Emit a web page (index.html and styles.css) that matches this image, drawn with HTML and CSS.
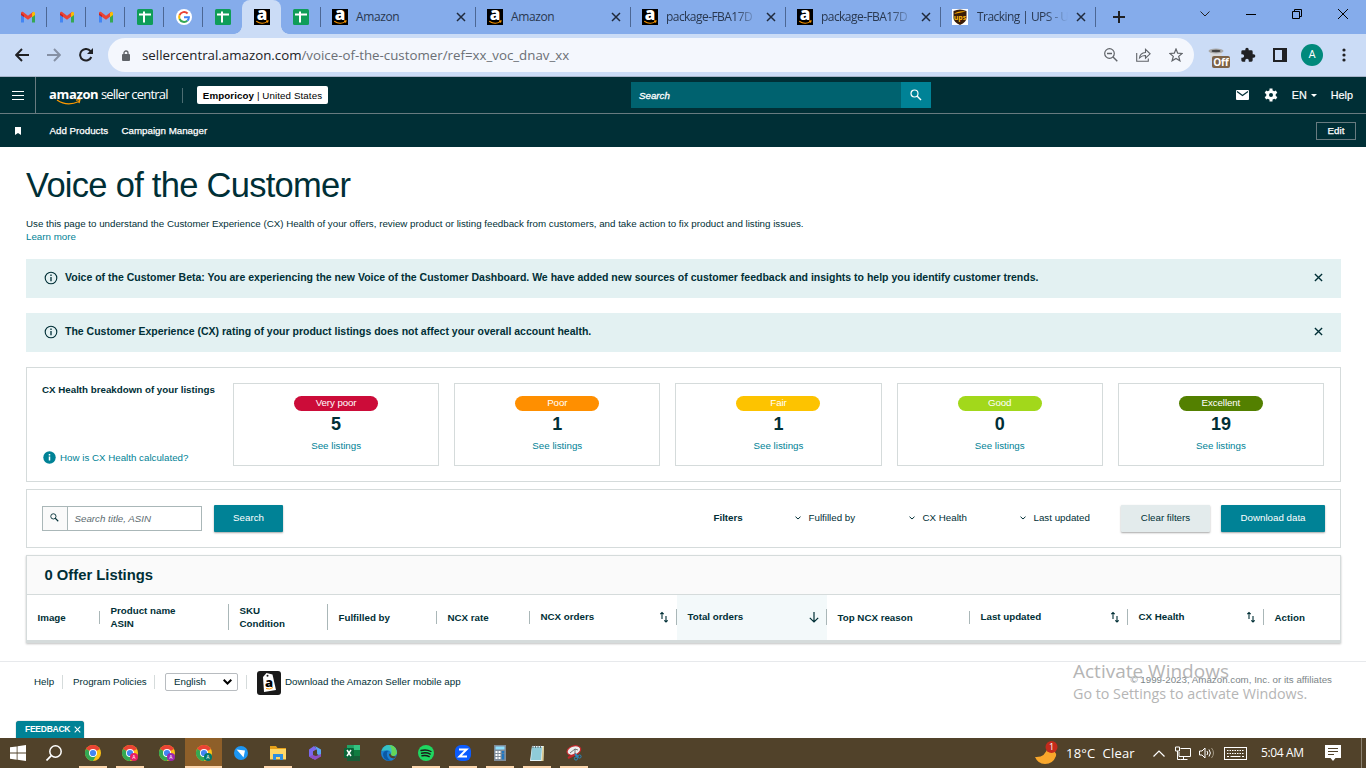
FILE: index.html
```html
<!DOCTYPE html>
<html lang="en">
<head>
  <meta charset="UTF-8">
  <meta name="viewport" content="width=device-width, initial-scale=1.0">
  <title>Voice of the Customer</title>
  <link rel="stylesheet" href="styles.css">
</head>
<body>
  <!-- Shared icons -->
  <svg class="sprite" width="0" height="0">
    <symbol id="gmail" viewBox="0 0 16 12">
      <path d="M1 2v9.500h3V5z" fill="#4285f4"/>
      <path d="M15 2v9.500h-3V5z" fill="#34a853"/>
      <path d="M1 2.200Q1 .5 2.800 .8L8 4.800l5.200-4L12.500 5.300 8 8.800 1 3.800z" fill="#ea4335"/>
      <path d="M12 2l1.500-1.300Q15 .6 15 2.200V4l-3 2.200z" fill="#fbbc04"/>
      <path d="M1 2.200L4 4.300V6L1 4z" fill="#c5221f"/>
    </symbol>
    <symbol id="sheets" viewBox="0 0 16 16">
      <rect width="16" height="16" rx="1.500" fill="#0f9d58"/>
      <path d="M2 5.500h12M7 2.500v11" stroke="#fff" stroke-width="2"/>
    </symbol>
    <symbol id="amz" viewBox="0 0 16 16">
      <rect width="16" height="16" fill="#000"/>
      <text x="8" y="11.300" text-anchor="middle" font-family="Open Sans, sans-serif" font-size="17" font-weight="800" fill="#fff">a</text>
      <path d="M2.300 12.200q5.500 3.800 11 .4M12 12l2-.2-.5 1.800" stroke="#f90" stroke-width="1.100" fill="none"/>
    </symbol>
    <symbol id="close" viewBox="0 0 10 10"><path d="M1 1l8 8M9 1L1 9" stroke="currentColor" stroke-width="1.500"/></symbol>
    <symbol id="mag" viewBox="0 0 12 12"><circle cx="4.500" cy="4.500" r="3.500" fill="none" stroke="currentColor" stroke-width="1.200"/><path d="M7 7l4 4" stroke="currentColor" stroke-width="1.500"/></symbol>
    <symbol id="info" viewBox="0 0 14 14"><circle cx="7" cy="7" r="5.800" fill="none" stroke="currentColor" stroke-width="1.100"/><path d="M7 6v4.200M7 3.600v1.300" stroke="currentColor" stroke-width="1.300"/></symbol>
    <symbol id="chev" viewBox="0 0 6 4"><path d="M.5 .7L3 3 5.500 .7" fill="none" stroke="currentColor"/></symbol>
    <symbol id="sort" viewBox="0 0 10 12"><path d="M3 8V1.500M1.300 3.200L3 1.500l1.700 1.700M7 5v6M5.300 9.300L7 11l1.700-1.700" fill="none" stroke="currentColor" stroke-width="1.100"/></symbol>
    <symbol id="chrome" viewBox="0 0 16 16">
      <circle cx="8" cy="8" r="8" fill="#fbc116"/>
      <path d="M8 8L1.070 4A8 8 0 0 1 14.930 4z" fill="#ea4335"/>
      <path d="M1.070 4A8 8 0 0 0 8 16l3.500-6L8 8z" fill="#34a853"/>
      <circle cx="8" cy="8" r="4" fill="#fff"/>
      <circle cx="8" cy="8" r="3.100" fill="#4285f4"/>
    </symbol>
  </svg>

  <!-- Browser tabs -->
  <div class="tabs">
    <div class="tab"><svg class="gm"><use href="#gmail"/></svg></div>
    <div class="tab"><svg class="gm"><use href="#gmail"/></svg></div>
    <div class="tab"><svg class="gm"><use href="#gmail"/></svg></div>
    <div class="tab"><svg class="fav"><use href="#sheets"/></svg></div>
    <div class="tab">
      <svg class="fav" viewBox="0 0 16 16">
        <circle cx="8" cy="8" r="8" fill="#fff"/>
        <g fill="none" stroke-width="2">
          <path d="M3.600 6A4.900 4.900 0 0 1 11.600 4.500" stroke="#ea4335"/>
          <path d="M3.600 10A4.900 4.900 0 0 1 3.600 6" stroke="#fbbc05"/>
          <path d="M11.300 11.700A4.900 4.900 0 0 1 3.600 10" stroke="#34a853"/>
          <path d="M8 8.200h4.900A4.900 4.900 0 0 1 11.300 11.700" stroke="#4285f4"/>
        </g>
      </svg>
    </div>
    <div class="tab no-line"><svg class="fav"><use href="#sheets"/></svg></div>
    <div class="tab active"><svg class="fav"><use href="#amz"/></svg></div>
    <div class="tab last-small"><svg class="fav"><use href="#sheets"/></svg></div>
    <div class="tab wide"><svg class="fav"><use href="#amz"/></svg><span class="tab-title">Amazon</span><svg class="tab-x"><use href="#close"/></svg></div>
    <div class="tab wide"><svg class="fav"><use href="#amz"/></svg><span class="tab-title">Amazon</span><svg class="tab-x"><use href="#close"/></svg></div>
    <div class="tab wide"><svg class="fav"><use href="#amz"/></svg><span class="tab-title fade">package-FBA17D</span><svg class="tab-x"><use href="#close"/></svg></div>
    <div class="tab wide"><svg class="fav"><use href="#amz"/></svg><span class="tab-title fade">package-FBA17D</span><svg class="tab-x"><use href="#close"/></svg></div>
    <div class="tab wide">
      <svg class="fav" viewBox="0 0 16 16">
        <rect width="16" height="16" fill="#fff"/>
        <path d="M1.500 2Q8-1 14.500 2v7q0 4-6.500 7-6.500-3-6.500-7z" fill="#3a1c08"/>
        <path d="M2 5Q6 1.500 14 2.500L2 5z" fill="#f7a900"/>
        <text x="8" y="10.500" text-anchor="middle" font-family="Open Sans, sans-serif" font-size="7" font-weight="700" fill="#fdb913">ups</text>
      </svg>
      <span class="tab-title fade ups-title">Tracking | UPS - U</span><svg class="tab-x"><use href="#close"/></svg>
    </div>
    <svg class="new-tab" viewBox="0 0 12 12"><path d="M6 0v12M0 6h12" stroke="#202124" stroke-width="2"/></svg>
    <div class="win-controls">
      <svg width="10" height="6" viewBox="0 0 10 6"><path d="M.5 .5L5 5 9.500 .5" fill="none" stroke="#222"/></svg>
      <svg width="10" height="2" viewBox="0 0 10 2"><path d="M0 1.500h10" stroke="#000"/></svg>
      <svg width="10" height="10" viewBox="0 0 10 10"><path d="M.5 2.500h7v7h-7zM2.500 2.500v-2h7v7h-2" fill="none" stroke="#000"/></svg>
      <svg width="10" height="10" viewBox="0 0 10 10"><path d="M0 0l10 10M10 0L0 10" stroke="#000"/></svg>
    </div>
  </div>

  <!-- Address bar -->
  <div class="toolbar">
    <svg class="nav-icon" viewBox="0 0 14 14"><path d="M14 7H1.500M7 1L1.200 7 7 13" fill="none" stroke="#202124" stroke-width="1.900"/></svg>
    <svg class="nav-icon" viewBox="0 0 14 14"><path d="M0 7h12.500M7 1l5.800 6L7 13" fill="none" stroke="#8590a4" stroke-width="1.900"/></svg>
    <svg class="nav-icon" viewBox="0 0 14 14"><path d="M12.300 9A5.800 5.800 0 1 1 11.500 3.200L13 5" fill="none" stroke="#202124" stroke-width="2"/><path d="M14 0v6H8z" fill="#202124"/></svg>
    <div class="omnibox">
      <svg width="8" height="11" viewBox="0 0 8 11"><rect y="4" width="8" height="7" rx="1" fill="#5f6368"/><path d="M2 4.500V3a2 2 0 0 1 4 0v1.500" fill="none" stroke="#5f6368" stroke-width="1.300"/></svg>
      <span class="url">sellercentral.amazon.com<span>/voice-of-the-customer/ref=xx_voc_dnav_xx</span></span>
      <svg width="14" height="14" viewBox="0 0 14 14"><circle cx="5.500" cy="5.500" r="4.800" fill="none" stroke="#5f6368" stroke-width="1.200"/><path d="M3 5.500h5M9 9l4.300 4.300" stroke="#5f6368" stroke-width="1.400"/></svg>
      <svg width="15" height="14" viewBox="0 0 15 14"><path d="M.7 5v8.300h11.600V10.500M3.500 10q.5-5 6-5.500V1.300l4.600 4.500-4.600 4.400V7.500Q6 7.300 3.500 10z" fill="none" stroke="#5f6368" stroke-width="1.100"/></svg>
      <svg width="14" height="14" viewBox="0 0 14 14"><path d="M7 1l1.700 4.200 4.500.3-3.500 2.900 1.200 4.400L7 10.400l-3.900 2.400 1.200-4.400L.8 5.500l4.500-.3z" fill="none" stroke="#5f6368" stroke-width="1.200"/></svg>
    </div>
    <div class="ext">
      <svg width="16" height="14" viewBox="0 0 16 14"><path d="M2 3l1 10h10l1-10z" fill="#d8dadd"/><ellipse cx="8" cy="3" rx="7.500" ry="2.500" fill="#aaa"/><ellipse cx="8" cy="3" rx="4.500" ry="1.200" fill="#444"/></svg>
      <span class="ext-badge">Off</span>
    </div>
    <svg class="puzzle" viewBox="0 0 24 24"><path d="M20.500 11H19V7a2 2 0 0 0-2-2h-4V3.500a2.500 2.500 0 0 0-5 0V5H4a2 2 0 0 0-2 2v3.800h1.500a2.700 2.700 0 0 1 0 5.400H2V20a2 2 0 0 0 2 2h3.800v-1.500a2.700 2.700 0 0 1 5.400 0V22H17a2 2 0 0 0 2-2v-4h1.500a2.500 2.500 0 0 0 0-5z" fill="#202124"/></svg>
    <svg class="panel-icon" viewBox="0 0 14 14"><path d="M1 1h12v12H1z" fill="none" stroke="#202124" stroke-width="2"/><path d="M9 1h4v12H9z" fill="#202124"/></svg>
    <span class="avatar">A</span>
    <svg class="dots" viewBox="0 0 4 14"><circle cx="2" cy="2" r="1.600"/><circle cx="2" cy="7" r="1.600"/><circle cx="2" cy="12" r="1.600"/></svg>
  </div>

  <!-- Seller Central header -->
  <header class="sc-header">
    <div class="burger"><svg width="12" height="9" viewBox="0 0 12 9"><path d="M0 .5h12M0 4.500h12M0 8.500h12" stroke="#fff"/></svg></div>
    <div class="logo">
      <b>amazon</b> <span>seller central</span>
      <svg class="smile" width="26" height="8" viewBox="0 0 26 8"><path d="M1 2q10 7 22 1.500M20 2.200l4-.6-1 3.600" fill="none" stroke="#f90" stroke-width="1.300"/></svg>
    </div>
    <div class="account"><b>Emporicoy</b> | United States</div>
    <div class="top-search">
      <span>Search</span>
      <div class="top-search-btn"><svg width="12" height="12"><use href="#mag"/></svg></div>
    </div>
    <div class="header-right">
      <svg width="13" height="10" viewBox="0 0 13 10"><rect width="13" height="10" rx="1" fill="#fff"/><path d="M1 1.500l5.500 4 5.500-4" fill="none" stroke="#002f36" stroke-width="1.200"/></svg>
      <svg class="gear" width="14" height="14" viewBox="0 0 14 14"><path d="M7 .5v13M1.400 3.800l11.200 6.400M12.600 3.800L1.400 10.200" stroke="#fff" stroke-width="3"/><circle cx="7" cy="7" r="4.800" fill="#fff"/><circle cx="7" cy="7" r="2" fill="#002f36"/></svg>
      <span class="lang">EN</span>
      <svg class="caret" width="6" height="3" viewBox="0 0 6 3"><path d="M0 0h6L3 3z" fill="#fff"/></svg>
      <span>Help</span>
    </div>
  </header>
  <nav class="sc-nav">
    <svg width="6" height="8" viewBox="0 0 6 8"><path d="M0 0h6v8L3 6 0 8z" fill="#fff"/></svg>
    <span class="nav-add">Add Products</span>
    <span class="nav-camp">Campaign Manager</span>
    <span class="edit">Edit</span>
  </nav>

  <main class="page">
    <h1>Voice of the Customer</h1>
    <p class="intro">Use this page to understand the Customer Experience (CX) Health of your offers, review product or listing feedback from customers, and take action to fix product and listing issues.</p>
    <a class="learn">Learn more</a>

    <div class="alert">
      <svg class="info"><use href="#info"/></svg>
      <span>Voice of the Customer Beta: You are experiencing the new Voice of the Customer Dashboard. We have added new sources of customer feedback and insights to help you identify customer trends.</span>
      <svg class="alert-x"><use href="#close"/></svg>
    </div>
    <div class="alert">
      <svg class="info"><use href="#info"/></svg>
      <span>The Customer Experience (CX) rating of your product listings does not affect your overall account health.</span>
      <svg class="alert-x"><use href="#close"/></svg>
    </div>

    <!-- CX Health breakdown -->
    <section class="health">
      <div class="health-side">
        <b>CX Health breakdown of your listings</b>
        <a class="how"><svg width="13" height="13" viewBox="0 0 13 13"><circle cx="6.500" cy="6.500" r="6.200" fill="#008296"/><path d="M6.500 5.500v4M6.500 3v1.500" stroke="#fff" stroke-width="1.500"/></svg>How is CX Health calculated?</a>
      </div>
      <div class="health-card"><span class="pill very-poor">Very poor</span><strong>5</strong><a>See listings</a></div>
      <div class="health-card"><span class="pill poor">Poor</span><strong>1</strong><a>See listings</a></div>
      <div class="health-card"><span class="pill fair">Fair</span><strong>1</strong><a>See listings</a></div>
      <div class="health-card"><span class="pill good">Good</span><strong>0</strong><a>See listings</a></div>
      <div class="health-card"><span class="pill excellent">Excellent</span><strong>19</strong><a>See listings</a></div>
    </section>

    <!-- Search and filters -->
    <section class="filters">
      <div class="search-box">
        <div class="search-icon"><svg width="9" height="9"><use href="#mag"/></svg></div>
        <span>Search title, ASIN</span>
      </div>
      <div class="btn btn-search">Search</div>
      <b class="filters-label">Filters</b>
      <span class="filter f1"><svg><use href="#chev"/></svg>Fulfilled by</span>
      <span class="filter f2"><svg><use href="#chev"/></svg>CX Health</span>
      <span class="filter f3"><svg><use href="#chev"/></svg>Last updated</span>
      <div class="btn btn-clear">Clear filters</div>
      <div class="btn btn-download">Download data</div>
    </section>

    <!-- Listings table -->
    <section class="listings">
      <h2>0 Offer Listings</h2>
      <div class="thead">
        <div class="th"><span>Image</span></div>
        <div class="th"><span>Product name<br>ASIN</span></div>
        <div class="th"><span>SKU<br>Condition</span></div>
        <div class="th"><span>Fulfilled by</span></div>
        <div class="th"><span>NCX rate</span></div>
        <div class="th sortable"><span>NCX orders<svg><use href="#sort"/></svg></span></div>
        <div class="th sortable sorted"><span>Total orders<svg viewBox="0 0 10 12"><path d="M5 1v10M.8 6.800L5 11l4.200-4.200" fill="none" stroke="currentColor" stroke-width="1.200"/></svg></span></div>
        <div class="th"><span>Top NCX reason</span></div>
        <div class="th sortable"><span>Last updated<svg><use href="#sort"/></svg></span></div>
        <div class="th sortable"><span>CX Health<svg><use href="#sort"/></svg></span></div>
        <div class="th"><span>Action</span></div>
      </div>
    </section>
  </main>

  <footer class="footer">
    <span class="foot-help">Help</span>
    <span class="foot-policies">Program Policies</span>
    <div class="foot-lang">
      <div class="select">English<svg width="9" height="6" viewBox="0 0 9 6"><path d="M.7 .8l3.800 3.700L8.300 .8" fill="none" stroke="#000" stroke-width="2"/></svg></div>
    </div>
    <svg class="app-icon" viewBox="0 0 24 24">
      <rect width="24" height="24" rx="3" fill="#1a1a1a"/>
      <path d="M6 6l3.500-4 6 1.500L19 19 7 21z" fill="#fff"/><circle cx="10.500" cy="4.800" r="1" fill="#1a1a1a"/>
      <text x="12" y="15.500" text-anchor="middle" font-family="Open Sans, sans-serif" font-size="13" font-weight="800">a</text>
      <path d="M9 17.500q4 1.500 7-1" stroke="#f90" fill="none"/>
    </svg>
    <span class="foot-app">Download the Amazon Seller mobile app</span>
    <span class="copy">© 1999-2023, Amazon.com, Inc. or its affiliates</span>
  </footer>

  <div class="watermark"><div>Activate Windows</div><p>Go to Settings to activate Windows.</p></div>
  <div class="feedback">FEEDBACK<svg width="7" height="7"><use href="#close"/></svg></div>

  <!-- Windows taskbar -->
  <div class="taskbar">
    <div class="task start"><svg viewBox="0 0 16 16" fill="#fff"><path d="M0 2.300L6.700 1.400v6.200H0zM7.500 1.300L16 0v7.600H7.500zM0 8.400h6.700v6.300L0 13.700zM7.500 8.400H16V16l-8.500-1.200z"/></svg></div>
    <div class="task find"><svg viewBox="0 0 16 16"><circle cx="9.500" cy="6.500" r="5.700" fill="none" stroke="#fff" stroke-width="1.500"/><path d="M5.300 10.700L.5 15.500" stroke="#fff" stroke-width="1.700"/></svg></div>
    <div class="task open"><svg><use href="#chrome"/></svg></div>
    <div class="task open"><svg viewBox="0 0 16 16"><use href="#chrome"/><circle cx="12" cy="12" r="4" fill="#e91e63"/><text x="12" y="14" class="mini">A</text></svg></div>
    <div class="task"><svg viewBox="0 0 16 16"><use href="#chrome"/><circle cx="12" cy="12" r="4" fill="#9c27b0"/><text x="12" y="14" class="mini">A</text></svg></div>
    <div class="task open current"><svg viewBox="0 0 16 16"><use href="#chrome"/><circle cx="12" cy="12" r="4" fill="#00796b"/><text x="12" y="14" class="mini">A</text></svg></div>
    <div class="task"><svg viewBox="0 0 16 16"><circle cx="8" cy="8" r="7" fill="#1c96f3"/><path d="M3.500 4.500l8.500 1-1.500 7-2-2.500z" fill="#fff"/></svg></div>
    <div class="task open"><svg viewBox="0 0 16 16"><path d="M0 1h6l1.500 2H16v11H0z" fill="#e5a01a"/><path d="M0 4h16v10.500H0z" fill="#ffd766"/><path d="M3 9h10v6h-3v-3H6v3H3z" fill="#2f8fe0"/></svg></div>
    <div class="task"><svg viewBox="0 0 16 16"><path d="M7 1L2 4.500v7L6 14V6.500L10 4z" fill="#7b68ee"/><path d="M8 1l6 3.500v7L10 9V5.500z" fill="#5aa7f5"/><path d="M2 11.500L6 10l3 1 5-2v2.500L8 15z" fill="#8c4fc4"/><circle cx="8" cy="8" r="2.200" fill="#51422a"/></svg></div>
    <div class="task"><svg viewBox="0 0 16 16"><path d="M3 0h13v16H3z" fill="#107c41"/><path d="M3 0h6.500v5H3z" fill="#21a366"/><path d="M9.500 0H16v5H9.500z" fill="#33c481"/><path d="M3 11h13v5H3z" fill="#185c37"/><rect y="3" width="10" height="10" rx="1" fill="#0b6337"/><path d="M3 5l4 6M7 5l-4 6" stroke="#fff" stroke-width="1.500"/></svg></div>
    <div class="task"><svg viewBox="0 0 16 16"><circle cx="8" cy="8" r="8" fill="#1b80d2"/><path d="M.5 6Q3-1 10 .3 16 2 16 8q-1 3.500-5 3-2-.5-1-2.500 0-5-9.500-2.500z" fill="#36c2c5"/><path d="M8 .1q7 0 8 7.900-.5 2-3 3-2 .3-3-.8Q12 3 8 .1z" fill="#65d657"/><path d="M6 8q-1 5 4 7.800Q3 16 2 10q0-5 6-4Q6 6.500 6 8z" fill="#0c59a4"/><path d="M9.500 8.500q0 3 5.500 3L13 13.500Q8 13 8 9z" fill="#51422a"/></svg></div>
    <div class="task open"><svg viewBox="0 0 16 16"><circle cx="8" cy="8" r="8" fill="#1ed760"/><path d="M3 5.500q5.500-1.500 10 1M3.500 8.200q5-1.200 8.700.9M4 10.800q4-1 7.200.8" fill="none" stroke="#1a1a1a" stroke-width="1.400" stroke-linecap="round"/></svg></div>
    <div class="task open"><svg viewBox="0 0 16 16"><rect width="16" height="16" rx="6" fill="#0b5cff"/><path d="M4 4.500h7.500L4.500 11.500H12" fill="none" stroke="#fff" stroke-width="2"/></svg></div>
    <div class="task open"><svg viewBox="0 0 16 16"><rect x="2" width="12" height="16" fill="#7e8b99"/><rect x="3.500" y="1.500" width="9" height="3" fill="#8ee0ff"/><path d="M4.500 6v8.500M7.500 6v8.500" stroke="#fff" stroke-width="2" stroke-dasharray="2 1"/><path d="M11 6v2.500M11 9v5.500" stroke="#2277c0" stroke-width="2.500"/></svg></div>
    <div class="task open"><svg viewBox="0 0 16 16"><path d="M3 1h12l-1 15H1z" fill="#e8f6fa"/><path d="M3 2h10l-1 13H2z" fill="#8fcbd8"/><path d="M13.500 2L15 1l-.5 15h-2z" fill="#d8c890"/><path d="M4 0v3M6.500 0v3M9 0v3M11.500 0v3" stroke="#555" stroke-width=".8"/></svg></div>
    <div class="task open"><svg viewBox="0 0 16 16"><ellipse cx="8" cy="5.500" rx="7" ry="4.500" fill="#eee" stroke="#c3272b" stroke-width="1.200" transform="rotate(-18 8 6)"/><path d="M4 8l5-4 3 1M9 4v5" stroke="#555" stroke-width=".8" fill="none"/><path d="M2 13l8-4" stroke="#c3272b" stroke-width="2"/><path d="M9 9l3 3" stroke="#2c88c0" stroke-width="2"/><circle cx="10" cy="13.500" r="1.600" fill="none" stroke="#2c88c0"/><circle cx="13.500" cy="11.500" r="1.600" fill="none" stroke="#2c88c0"/></svg></div>

    <div class="tray">
      <svg width="24" height="24" viewBox="0 0 24 24"><path d="M1 16q10 1 13-10 9 4 8 9-3 8-11 8-7 0-10-7z" fill="#f9a72b"/><circle cx="17.500" cy="6" r="6" fill="#c42b1c"/><text x="17.500" y="9.300" text-anchor="middle" font-size="9" font-family="Open Sans, sans-serif" fill="#fff">1</text></svg>
      <span class="weather">18°C&nbsp; Clear</span>
      <svg class="up" width="12" height="7" viewBox="0 0 12 7"><path d="M.5 6.500L6 1l5.500 5.500" fill="none" stroke="#fff" stroke-width="1.200"/></svg>
      <svg class="net" width="16" height="14" viewBox="0 0 16 14"><path d="M5.500 2.500h10v8H4V6M8.500 10.500v3M5.500 13.500h7M.5 1h4v4h-4zM2.500 5v8.500h3" fill="none" stroke="#fff"/></svg>
      <svg class="vol" width="16" height="14" viewBox="0 0 16 14"><path d="M.5 5h2.500l3-3v10L3 9H.5zM8 5q1.500 2 0 4M10 3.500q2.800 3.500 0 7" fill="none" stroke="#fff"/><path d="M12.500 2q4 5 0 10" fill="none" stroke="#a59b87"/></svg>
      <svg class="keys" width="23" height="13" viewBox="0 0 23 13"><rect x=".5" y=".5" width="22" height="12" fill="none" stroke="#fff"/><path d="M3 3.500h17M3 6.500h17" stroke="#fff" stroke-dasharray="1.500 1"/><path d="M3 9.500h2M6.500 9.500h10M18 9.500h2" stroke="#fff"/></svg>
      <span class="clock">5:04 AM</span>
      <svg class="notif" width="16" height="16" viewBox="0 0 16 16"><path d="M0 0h16v13H10.500L8 16l-2.500-3H0z" fill="#fff"/><path d="M3 3.500h10M3 6.500h10M3 9.500h6" stroke="#51422a"/></svg>
      <i class="peek"></i>
    </div>
  </div>
</body>
</html>
```
FILE: styles.css
```css
* { box-sizing: border-box; }
body {
  margin: 0;
  width: 1366px;
  height: 768px;
  overflow: hidden;
  position: relative;
  display: flex;
  flex-direction: column;
  background: #fff;
  color: #002f36;
  font-family: "Liberation Sans", Arial, sans-serif;
  font-size: 9.75px;
  line-height: 13px;
  white-space: nowrap;
}
svg { display: block; flex: none; }
.sprite { position: absolute; }
a { color: #008296; }

/* ---------- Browser tabs ---------- */
.tabs {
  height: 34px;
  flex: none;
  display: flex;
  padding-left: 8px;
  background: #85aceb;
}
.tab {
  width: 39px;
  flex: none;
  display: flex;
  align-items: center;
  justify-content: center;
  background: linear-gradient(#4c6794, #4c6794) no-repeat right 7px / 1px 20px;
}
.tab.no-line { background: none; }
.tab.last-small { width: 40px; padding-right: 1px; }
.tab.active {
  background: #cbdcf6;
  border-radius: 8px 8px 0 0;
  position: relative;
}
.tab.active::before,
.tab.active::after {
  content: "";
  position: absolute;
  bottom: 0;
  width: 8px;
  height: 8px;
}
.tab.active::before { left: -8px; background: radial-gradient(circle at 0 0, transparent 7.5px, #cbdcf6 8px); }
.tab.active::after { right: -8px; background: radial-gradient(circle at 100% 0, transparent 7.5px, #cbdcf6 8px); }
.tab.wide {
  width: 155px;
  justify-content: flex-start;
  padding-left: 11px;
  background-position: right 7px;
}
.fav { width: 16px; height: 16px; }
.gm { width: 16px; height: 12px; }
.tab-title {
  margin-left: 8px;
  width: 94px;
  color: #293850;
  font: 12px/18px "Open Sans", sans-serif;
  letter-spacing: -.4px;
}
.fade {
  width: 92px;
  margin-right: 2px;
  letter-spacing: -.55px;
  -webkit-mask-image: linear-gradient(to right, #000 75%, transparent);
  mask-image: linear-gradient(to right, #000 75%, transparent);
}
.ups-title { margin-left: 9px; width: 91px; }
.tab-x { width: 10px; height: 10px; margin-left: 6px; color: #202a3c; }
.new-tab { width: 12px; height: 12px; margin: 11px 0 0 17px; }
.win-controls {
  margin-left: 75px;
  height: 28px;
  display: flex;
  align-items: center;
  gap: 36px;
}

/* ---------- Address bar ---------- */
.toolbar {
  height: 43px;
  flex: none;
  display: flex;
  align-items: center;
  padding-left: 15px;
  background: #cbdcf6;
  border-bottom: 1px solid #a7b4ca;
}
.nav-icon { width: 14px; height: 14px; margin-right: 18px; }
.omnibox {
  width: 1086px;
  height: 34px;
  margin-left: -3px;
  padding: 0 11px 0 14px;
  display: flex;
  align-items: center;
  gap: 18px;
  border-radius: 17px;
  background: #f4f7fd;
}
.url {
  flex: 1;
  margin-left: -6px;
  color: #202124;
  font: 13.300px/20px "Open Sans", sans-serif;
}
.url span { color: #6b6f75; }
.ext { position: relative; margin-left: 14px; width: 22px; }
.ext-badge {
  position: absolute;
  left: 4px;
  top: 8px;
  width: 18px;
  border-radius: 2px;
  background: #7d6347;
  color: #fff;
  text-align: center;
  font: bold 10px/12px "Open Sans", sans-serif;
}
.puzzle { width: 16px; height: 16px; margin-left: 10px; }
.panel-icon { width: 14px; height: 14px; margin-left: 17px; }
.avatar {
  width: 22px;
  height: 22px;
  margin-left: 14px;
  border-radius: 50%;
  background: #00897b;
  color: #fff;
  text-align: center;
  font: 11px/22px Roboto, sans-serif;
}
.dots { width: 4px; height: 14px; margin-left: 19px; fill: #202124; }

/* ---------- Seller Central header ---------- */
.sc-header {
  height: 37px;
  flex: none;
  display: flex;
  align-items: center;
  background: #002f36;
  border-bottom: 1px solid #687b80;
  color: #fff;
}
.burger {
  width: 36px;
  height: 36px;
  display: flex;
  align-items: center;
  justify-content: center;
  border-right: 1px solid #687b80;
}
.logo {
  position: relative;
  width: 147px;
  padding: 0 0 3px 13px;
  border-right: 1px solid #4d6d72;
  line-height: 12px;
  font-family: "Open Sans", sans-serif;
  font-size: 13px;
  letter-spacing: -.8px;
}
.logo b { letter-spacing: -.35px; }
.smile { position: absolute; left: 20px; top: 10px; }
.account {
  width: 131px;
  height: 18px;
  margin-left: 14px;
  border-radius: 2px;
  background: #fff;
  color: #000;
  text-align: center;
  line-height: 19px;
  letter-spacing: .1px;
}
.top-search {
  width: 300px;
  height: 26px;
  margin-left: 303px;
  padding-left: 8px;
  display: flex;
  align-items: center;
  justify-content: space-between;
  background: #00626f;
  font-style: italic;
  -webkit-text-stroke: .3px #fff;
}
.top-search-btn {
  width: 30px;
  height: 26px;
  display: flex;
  align-items: center;
  justify-content: center;
  background: #008296;
}
.header-right {
  margin-left: auto;
  padding-right: 13px;
  display: flex;
  align-items: center;
  font-size: 10.800px;
  -webkit-text-stroke: .2px #fff;
}
.gear { margin-left: 15px; }
.lang { margin-left: 14px; }
.caret { margin: 0 14px 0 4px; }
.sc-nav {
  height: 33px;
  flex: none;
  display: flex;
  align-items: center;
  padding: 0 10px 0 15px;
  background: #002f36;
  color: #fff;
  -webkit-text-stroke: .25px #fff;
}
.nav-add { margin-left: 28.500px; width: 72px; }
.edit {
  width: 40px;
  height: 18px;
  margin-left: auto;
  border: 1px solid #687b80;
  text-align: center;
  line-height: 16px;
}

/* ---------- Page content ---------- */
.page { padding: 18px 25px 0 26px; }
h1 {
  margin: 0 0 12px;
  font-size: 34.500px;
  font-weight: normal;
  line-height: 41px;
  height: 40px;
  letter-spacing: -.72px;
}
.intro { margin: 0; }
.learn { display: block; margin-bottom: 16px; }
.alert {
  height: 39px;
  margin-bottom: 15px;
  padding: 0 18px 2px;
  display: flex;
  align-items: center;
  background: #e3f1f2;
  font-size: 10.500px;
  font-weight: bold;
}
.alert span { flex: 1; }
.info { width: 14px; height: 14px; margin-right: 7px; }
.alert-x { width: 9px; height: 9px; }
.health {
  height: 115px;
  padding: 15px 16px 15px 15px;
  display: grid;
  grid-template-columns: 176px repeat(5, 1fr);
  column-gap: 15px;
  border: 1px solid #d5dbdb;
}
.health-side {
  display: flex;
  flex-direction: column;
  justify-content: space-between;
  padding-bottom: 2px;
}
.how { display: flex; align-items: center; gap: 4px; padding-left: 1px; }
.health-card {
  height: 83px;
  display: flex;
  flex-direction: column;
  align-items: center;
  padding-top: 12px;
  border: 1px solid #d5dbdb;
}
.pill {
  width: 84px;
  height: 15px;
  border-radius: 8px;
  color: #fff;
  text-align: center;
  line-height: 14px;
  letter-spacing: -.1px;
}
.very-poor { background: #cc0c39; }
.poor { background: #ff8f00; }
.fair { background: #fdc300; }
.good { background: #a2d81b; }
.excellent { background: #538000; }
.health-card strong { margin: 3px 0 5px; font-size: 18px; line-height: 20px; }
.filters {
  height: 59px;
  margin-top: 7px;
  padding: 0 15px;
  display: flex;
  align-items: center;
  border: 1px solid #d5dbdb;
}
.search-box {
  width: 160px;
  height: 25px;
  display: flex;
  align-items: center;
  border: 1px solid #aab7b8;
  color: #5c6b70;
  font-style: italic;
}
.search-icon {
  width: 25px;
  height: 23px;
  margin-right: 6.500px;
  padding: 6px 7px;
  background: #fafafa;
  border-right: 1px solid #aab7b8;
  color: #002f36;
}
.btn {
  height: 27px;
  border-radius: 1px;
  background: #008296;
  color: #fff;
  text-align: center;
  line-height: 26px;
  box-shadow: 0 1px 2px rgba(0, 0, 0, .35);
}
.btn-search { width: 69px; margin-left: 12px; }
.filters-label { width: 81px; margin-left: 430.500px; padding-bottom: 2px; }
.filter { display: flex; align-items: center; gap: 8px; padding-bottom: 2px; }
.filter svg { width: 6px; height: 4px; }
.f1 { width: 114px; }
.f2 { width: 111px; }
.f3 { width: 98px; }
.btn-clear { width: 89px; margin-left: auto; background: #e3ebec; color: #002f36; }
.btn-download { width: 104px; margin-left: 11px; }

/* ---------- Listings table ---------- */
.listings {
  height: 88px;
  margin-top: 7px;
  border: 1px solid #d5dbdb;
  border-bottom-width: 3px;
  box-shadow: 0 1px 2px rgba(0, 0, 0, .25);
}
h2 {
  height: 39px;
  margin: 0;
  padding-left: 17.500px;
  background: #fafafa;
  border-bottom: 1px solid #d5dbdb;
  font-size: 14.800px;
  line-height: 38px;
}
.thead {
  height: 45px;
  display: grid;
  grid-template-columns: 73px 129px 99px 109px 93px 147px 150px 143px 158px 136px 1fr;
  font-weight: bold;
}
.th { display: flex; align-items: center; padding-bottom: 1px; }
.th > span {
  flex: 1;
  padding-left: 10.500px;
  border-right: 1px solid #aab7b8;
}
.th:last-child > span { border: 0; }
.sortable > span {
  height: 16px;
  display: flex;
  align-items: center;
  justify-content: space-between;
  padding: 0 7px 2px 10.500px;
}
.sortable svg { width: 10px; height: 12px; margin-bottom: -2px; }
.sorted { background: #f3f9fa; }

/* ---------- Footer ---------- */
.footer {
  height: 42px;
  margin-top: 18px;
  padding: 0 34px 1px;
  display: flex;
  align-items: center;
  border-top: 1px solid #e7e9ec;
}
.footer > span, .foot-lang { line-height: 14px; }
.foot-help { width: 29px; border-right: 1px solid #d5dbdb; }
.foot-policies { width: 92px; padding-left: 10px; border-right: 1px solid #d5dbdb; }
.foot-lang { width: 92px; padding-left: 10px; border-right: 1px solid #d5dbdb; }
.select {
  width: 73px;
  height: 18px;
  margin: -2px 0;
  padding: 0 5px 0 8px;
  display: flex;
  align-items: center;
  justify-content: space-between;
  border: 1px solid #b8bcc0;
  border-radius: 2px;
}
.app-icon { width: 24px; height: 24px; margin: 2px 4px 0 10px; }
.footer .copy { margin: -4px 0 0 auto; color: #7c8588; }
.watermark {
  position: absolute;
  left: 1073px;
  top: 660px;
  color: #b5b5b5;
  font: 19px/22px "Open Sans", sans-serif;
}
.watermark p { margin: 1px 0 0; font-size: 14.300px; line-height: 21px; }
.feedback {
  position: absolute;
  left: 16px;
  top: 721px;
  width: 68px;
  height: 17px;
  padding-left: 9px;
  display: flex;
  align-items: center;
  gap: 4px;
  background: #008296;
  border-radius: 3px 3px 0 0;
  box-shadow: 0 0 1px #555;
  color: #fff;
  font-size: 8.500px;
  font-weight: bold;
  letter-spacing: -.25px;
}

/* ---------- Taskbar ---------- */
.taskbar {
  height: 30px;
  margin-top: auto;
  flex: none;
  display: flex;
  background: #51422a;
  color: #fff;
}
.task {
  width: 37px;
  display: flex;
  align-items: center;
  justify-content: center;
}
.task svg { width: 16px; height: 16px; }
.task.start { width: 36px; }
.task.find { width: 38px; padding-right: 2px; }
.open { background: linear-gradient(#fcd6ac, #fcd6ac) no-repeat center bottom / 28px 2px; }
.current { background: linear-gradient(#fcd6ac, #fcd6ac) no-repeat center bottom / 37px 2px, #8e5f29; }
.mini { fill: #fff; font: 5px Roboto, sans-serif; text-anchor: middle; }
.tray {
  margin-left: auto;
  display: flex;
  align-items: center;
  font: 13px/20px "Open Sans", sans-serif;
}
.weather { width: 78px; margin-left: 8px; letter-spacing: .2px; }
.up { margin-left: 9px; }
.net { margin-left: 10px; }
.vol { margin-left: 8px; }
.keys { margin-left: 9px; }
.clock { width: 49px; margin-left: 14px; font-size: 12px; letter-spacing: -.35px; }
.notif { margin-left: 15px; }
.peek { width: 1px; height: 30px; margin: 0 4px 0 20px; background: #8b8272; }
```
